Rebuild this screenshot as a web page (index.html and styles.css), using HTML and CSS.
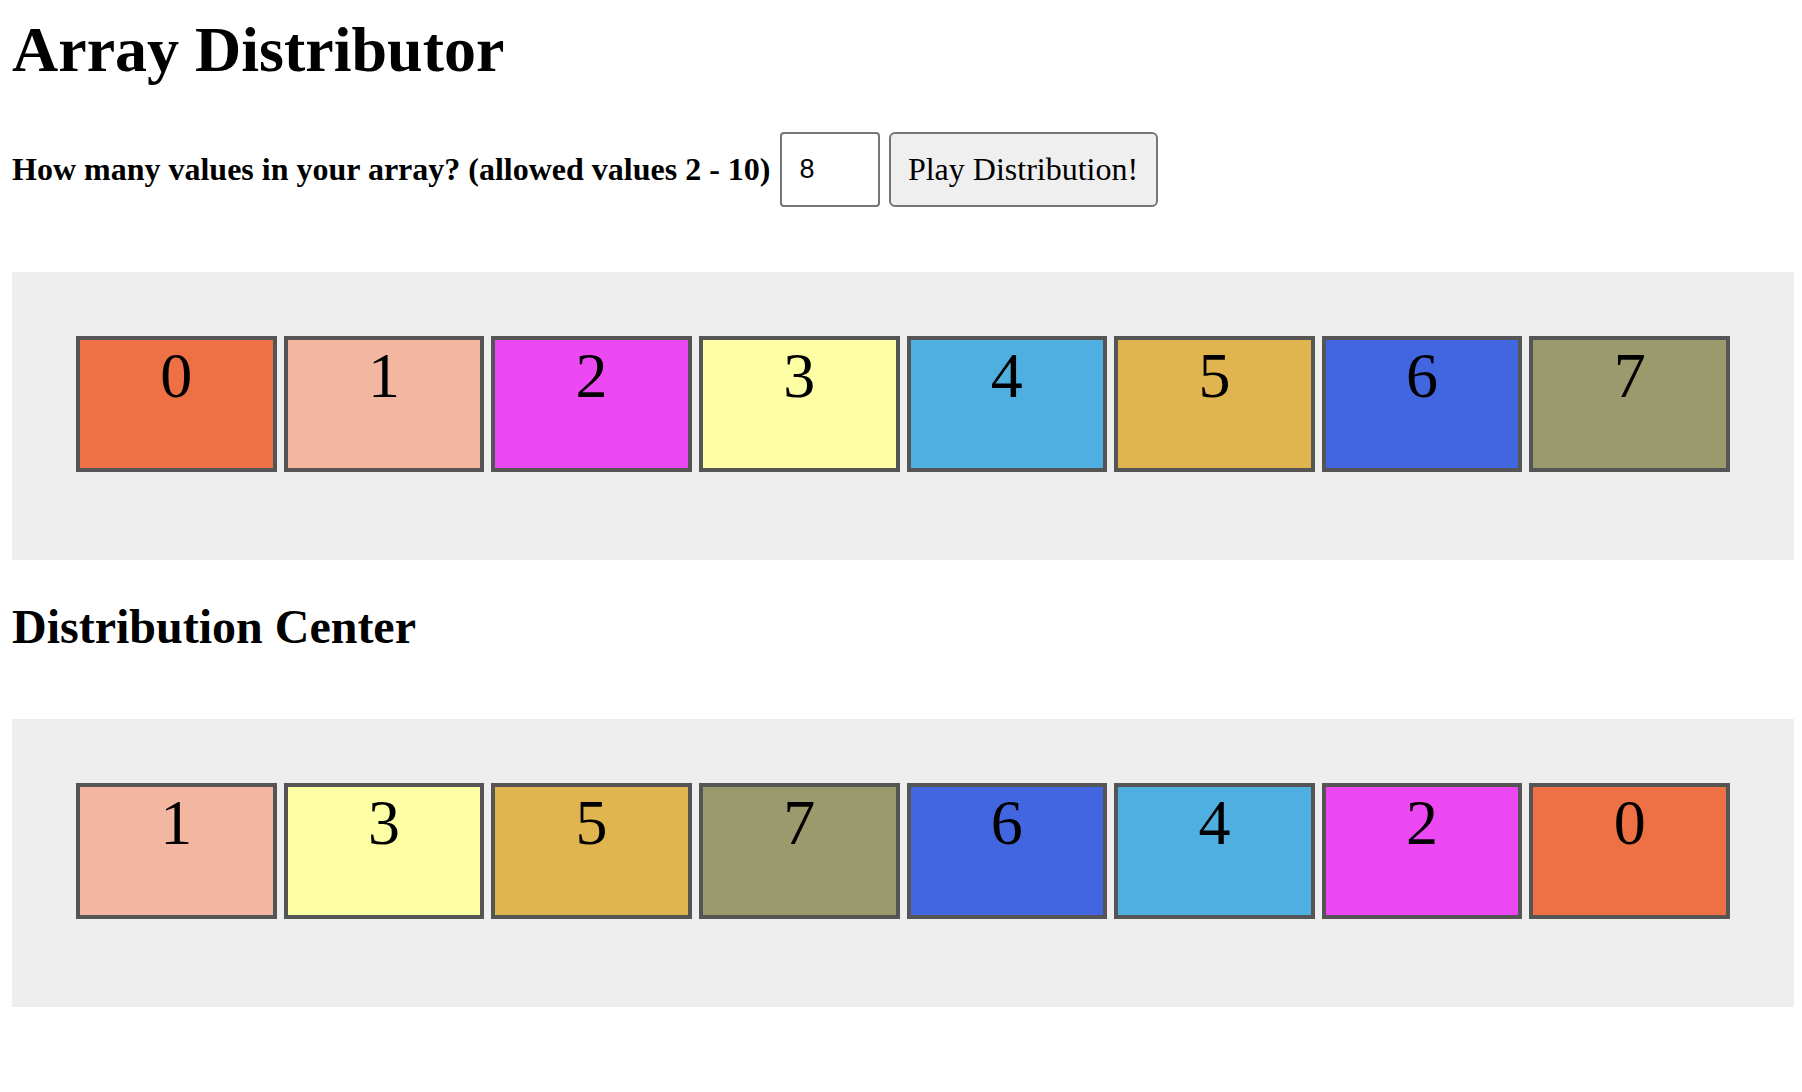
FILE: index.html
```html
<!DOCTYPE html>
<html lang="en">
<head>
<meta charset="utf-8">
<title>Array Distributor</title>
<link rel="stylesheet" href="styles.css">
</head>
<body>
<div class="page">
  <h1 class="title">Array Distributor</h1>
  <div class="controls">
    <label class="label" for="count">How many values in your array? (allowed values 2 - 10)</label>
    <input class="count-input" id="count" type="text" value="8">
    <button class="play-btn" type="button">Play Distribution!</button>
  </div>
  <div class="tray">
    <div class="cell c0">0</div>
    <div class="cell c1">1</div>
    <div class="cell c2">2</div>
    <div class="cell c3">3</div>
    <div class="cell c4">4</div>
    <div class="cell c5">5</div>
    <div class="cell c6">6</div>
    <div class="cell c7">7</div>
  </div>
  <h2 class="subtitle">Distribution Center</h2>
  <div class="tray">
    <div class="cell c1">1</div>
    <div class="cell c3">3</div>
    <div class="cell c5">5</div>
    <div class="cell c7">7</div>
    <div class="cell c6">6</div>
    <div class="cell c4">4</div>
    <div class="cell c2">2</div>
    <div class="cell c0">0</div>
  </div>
</div>
</body>
</html>
```

FILE: styles.css
```css
html, body {
  margin: 0;
  padding: 0;
  background: #ffffff;
}

body {
  font-family: "Liberation Serif", "Times New Roman", serif;
  color: #000;
}

.page {
  padding: 14px 8px 40px 12px;
}

.title {
  margin: 0;
  font-size: 64px;
  font-weight: bold;
  line-height: 71px;
}

.controls {
  display: flex;
  align-items: center;
  margin-top: 47px;
  height: 75px;
}

.label {
  font-size: 32px;
  font-weight: bold;
  margin-right: 9px;
}

.count-input {
  box-sizing: border-box;
  width: 100px;
  height: 75px;
  border: 2px solid #767676;
  border-radius: 4px;
  padding: 0 0 0 18px;
  font-family: "Liberation Sans", Arial, sans-serif;
  font-size: 27px;
  color: #000;
  background: #fff;
  margin: 0 9px 0 0;
  outline: none;
}

.play-btn {
  box-sizing: border-box;
  height: 75px;
  width: 269px;
  padding: 0;
  border: 2px solid #767676;
  border-radius: 6px;
  background: #efefef;
  font-family: "Liberation Serif", "Times New Roman", serif;
  font-size: 32px;
  color: #000;
  margin: 0;
}

.tray {
  display: flex;
  gap: 7px;
  background: #eeeeee;
  padding: 64px 64px 88px;
  margin-top: 65px;
}

.subtitle {
  margin: 40px 0 0;
  font-size: 48px;
  font-weight: bold;
  line-height: 53px;
}

.subtitle + .tray {
  margin-top: 66px;
}

.cell {
  flex: 1 1 0;
  box-sizing: border-box;
  height: 136px;
  border: 4px solid #555555;
  text-align: center;
  font-size: 64px;
  line-height: 71px;
}

.c0 { background: #ed7145; }
.c1 { background: #f3b6a0; }
.c2 { background: #ec48f4; }
.c3 { background: #fefea4; }
.c4 { background: #4fafe0; }
.c5 { background: #e0b550; }
.c6 { background: #4166e0; }
.c7 { background: #9b9a6d; }
```
